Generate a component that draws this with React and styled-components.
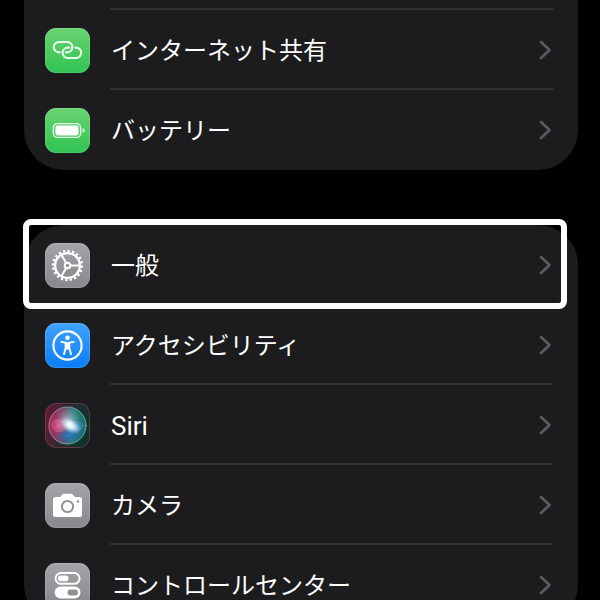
import React from 'react';
import styled, { createGlobalStyle } from 'styled-components';

const GlobalStyle = createGlobalStyle`
    * {
        box-sizing: border-box;
    }

    body {
        margin: 0;
        background: #000;
        color: #fff;
        font-family: Roboto, "Noto Sans CJK JP", sans-serif;
    }
`;

const Page = styled.main`
    display: flex;
    flex-direction: column;
    gap: 55px;
    height: 100vh;
    padding: 0 22px 0 24px;
    overflow: hidden;
`;

const Group = styled.ul`
    flex: none;
    margin: 0;
    padding: 0;
    list-style: none;
    background: #1c1c1e;
    border-radius: ${props => props.$continued ? '0 0 40px 40px' : '40px'};
`;

const Item = styled.li`
    position: relative;
`;

const Divider = styled.hr`
    height: 2px;
    margin: -2px 25px 0 86px;
    border: 0;
    background: #303032;
`;

const PreviousRow = styled.div`
    height: 10px;
`;

const Row = styled.a`
    display: flex;
    align-items: center;
    gap: 21px;
    height: 80px;
    padding: 0 26px 0 21px;
    color: inherit;
    text-decoration: none;
`;

const Label = styled.span`
    flex: 1;
    padding-top: 2px;
    font-size: ${props => props.$latin ? 26 : 24}px;
    line-height: 32px;
    white-space: nowrap;
`;

const Tile = styled.span`
    display: flex;
    flex: none;
    width: 45px;
    height: 45px;
    border-radius: 11px;
    overflow: hidden;
    background: ${props => props.$background};
    box-shadow: inset 0 0 1px 1px rgba(255, 255, 255, 0.15);
`;

const Highlight = styled.div`
    position: absolute;
    inset: -6px 11px -4px -1px;
    border: 6px solid #fff;
    border-radius: 8px;
    pointer-events: none;
    z-index: 1;
`;

const GREEN = 'linear-gradient(#69d273, #30c452)';
const GRAY = 'linear-gradient(#a4a4a8, #88888c)';
const BLUE = 'linear-gradient(#3fa4ff, #0a7cf5)';

const Icon = ({ children }) => (
    <svg width="45" height="45" viewBox="0 0 45 45" fill="none" stroke="#fff" strokeLinecap="round" strokeLinejoin="round" aria-hidden="true">
        {children}
    </svg>
);

const HotspotIcon = () => (
    <Icon>
        <g stroke="#e9fbe9" strokeWidth="2.1">
            <path d="M14.6 24.4H14A5.2 5.2 0 0 1 14 14h8.2a5.2 5.2 0 0 1 0 10.400h-1.400" />
            <path d="M30.4 19.600h.6a5.200 5.200 0 0 1 0 10.400h-8.200a5.200 5.200 0 0 1 0-10.400h1.400" />
        </g>
    </Icon>
);

const BatteryIcon = () => (
    <Icon>
        <rect x="8.4" y="15.6" width="27.2" height="13.8" rx="4.2" stroke="#e9fbe9" strokeWidth="1.4" />
        <rect x="10.4" y="17.6" width="23.2" height="9.8" rx="2.2" fill="#fff" stroke="none" />
        <path d="M37.5 20.2c3 .5 3 4 0 4.500z" fill="#d9f6dc" stroke="none" />
    </Icon>
);

const GearIcon = () => (
    <Icon>
        <circle cx="22.5" cy="22.5" r="12.4" strokeWidth="2.4" />
        <circle cx="22.5" cy="22.5" r="14.5" strokeWidth="2.4" strokeLinecap="butt" pathLength="40" strokeDasharray="1 1" />
        <circle cx="22.5" cy="22.5" r="2.8" strokeWidth="2" />
        <path d="M25.6 22.5h8.4M21 19.8l-4.3-7.5M21 25.2l-4.3 7.5" strokeWidth="2" />
    </Icon>
);

const AccessibilityIcon = () => (
    <Icon>
        <circle cx="22.5" cy="22.5" r="14.1" strokeWidth="2.1" />
        <circle cx="22.5" cy="14.7" r="2.3" fill="#fff" stroke="none" />
        <path d="M16.400 18.900l4.300.7v5l-1.700 6.600M28.600 18.900l-4.300.7v5l1.700 6.600" strokeWidth="1.900" />
        <path d="M20.400 19.400h4.200v5.200l-.7 1.600h-2.800l-.7-1.600z" fill="#fff" strokeWidth=".6" />
    </Icon>
);

const SiriIcon = () => (
    <Icon>
        <defs>
            <linearGradient id="siri-tile" x1="0" y1="0.1" x2="1" y2="0.3">
                <stop offset="0" stopColor="#6e1634" />
                <stop offset="0.45" stopColor="#2c2a31" />
                <stop offset="1" stopColor="#0d332b" />
            </linearGradient>
            <linearGradient id="siri-orb" x1="0" y1="0.4" x2="1" y2="0.5">
                <stop offset="0" stopColor="#b01f55" />
                <stop offset="0.35" stopColor="#7d4a68" />
                <stop offset="0.6" stopColor="#3a7c86" />
                <stop offset="1" stopColor="#0c7860" />
            </linearGradient>
            <radialGradient id="siri-blue">
                <stop offset="0" stopColor="#2c7fc4" />
                <stop offset="1" stopColor="#1b4f9a" stopOpacity="0" />
            </radialGradient>
            <radialGradient id="siri-pink">
                <stop offset="0" stopColor="#f0569a" stopOpacity="0.8" />
                <stop offset="1" stopColor="#d0246a" stopOpacity="0" />
            </radialGradient>
            <radialGradient id="siri-core">
                <stop offset="0" stopColor="#fff" />
                <stop offset="0.35" stopColor="#f0fcff" stopOpacity="0.8" />
                <stop offset="1" stopColor="#b9e6f5" stopOpacity="0" />
            </radialGradient>
        </defs>
        <rect x=".5" y=".5" width="44" height="44" rx="11" fill="url(#siri-tile)" stroke="#b0405f" strokeOpacity=".4" />
        <circle cx="22.5" cy="22.5" r="18.6" fill="url(#siri-orb)" stroke="#a9cfc8" strokeOpacity=".6" />
        <ellipse cx="24" cy="32" rx="15" ry="9" fill="url(#siri-blue)" stroke="none" />
        <circle cx="32" cy="24" r="9" fill="url(#siri-blue)" stroke="none" />
        <circle cx="14" cy="23" r="10" fill="url(#siri-pink)" stroke="none" />
        <path d="M6.5 21c2-6 9-6 17 .5 6-4 12-4 14.5 .5-1 7-8 6-14.5 1-6 8-15 8-17-2z" fill="#fff" fillOpacity=".1" stroke="#f3b5d0" strokeOpacity=".25" strokeWidth=".7" />
        <circle cx="23" cy="18" r="13" fill="url(#siri-core)" fillOpacity=".4" stroke="none" />
        <ellipse cx="25.5" cy="22.5" rx="12" ry="7" transform="rotate(35 25.5 22.5)" fill="url(#siri-core)" stroke="none" />
        <circle cx="24.5" cy="21.5" r="5" fill="url(#siri-core)" stroke="none" />
    </Icon>
);

const CameraIcon = () => (
    <Icon>
        <path d="M10.6 14h4.6l2-2.4q.6-.8 1.600-.8h7.400q1 0 1.600.8l2 2.400h4.600a2.600 2.600 0 0 1 2.600 2.600v14.800a2.600 2.600 0 0 1-2.600 2.600h-23.800a2.600 2.600 0 0 1-2.600-2.600v-14.800a2.600 2.600 0 0 1 2.600-2.600z" fill="#fff" stroke="none" />
        <circle cx="22.5" cy="23.5" r="5.6" stroke="#949498" strokeWidth="2" />
        <circle cx="33" cy="18.5" r="1.3" fill="#949498" stroke="none" />
    </Icon>
);

const ControlCenterIcon = () => (
    <Icon>
        <rect x="10.6" y="10" width="24" height="10.8" rx="5.4" strokeWidth="1.9" />
        <rect x="13" y="12.6" width="10.5" height="5.6" rx="2.8" fill="#fff" stroke="none" />
        <rect x="9.7" y="23.5" width="25.8" height="12" rx="6" fill="#fff" stroke="none" />
        <rect x="22.5" y="26.6" width="10.5" height="5.8" rx="2.9" fill="#919195" stroke="none" />
    </Icon>
);

const Chevron = () => (
    <svg width="14" height="20" viewBox="0 0 14 20" fill="none" aria-hidden="true">
        <path d="M3 2l8.5 8L3 18" stroke="#5d5d61" strokeWidth="2.6" strokeLinecap="round" strokeLinejoin="round" />
    </svg>
);

const NETWORK = [
    { label: 'インターネット共有', icon: HotspotIcon, background: GREEN },
    { label: 'バッテリー', icon: BatteryIcon, background: GREEN },
];

const SYSTEM = [
    { label: '一般', icon: GearIcon, background: GRAY, highlighted: true },
    { label: 'アクセシビリティ', icon: AccessibilityIcon, background: BLUE },
    { label: 'Siri', icon: SiriIcon, background: '#1c1c1e', latin: true },
    { label: 'カメラ', icon: CameraIcon, background: GRAY },
    { label: 'コントロールセンター', icon: ControlCenterIcon, background: GRAY },
];

const SettingsItem = ({ label, icon: Glyph, background, highlighted, latin, divided }) => (
    <Item>
        {divided && <Divider />}
        <Row href="#">
            <Tile $background={background}><Glyph /></Tile>
            <Label $latin={latin}>{label}</Label>
            <Chevron />
        </Row>
        {highlighted && <Highlight />}
    </Item>
);

export default function App() {
    return (
        <Page>
            <GlobalStyle />
            <Group $continued>
                <Item><PreviousRow /></Item>
                {NETWORK.map(item => <SettingsItem key={item.label} {...item} divided />)}
            </Group>
            <Group>
                {SYSTEM.map((item, index) => <SettingsItem key={item.label} {...item} divided={index > 0} />)}
            </Group>
        </Page>
    );
}
